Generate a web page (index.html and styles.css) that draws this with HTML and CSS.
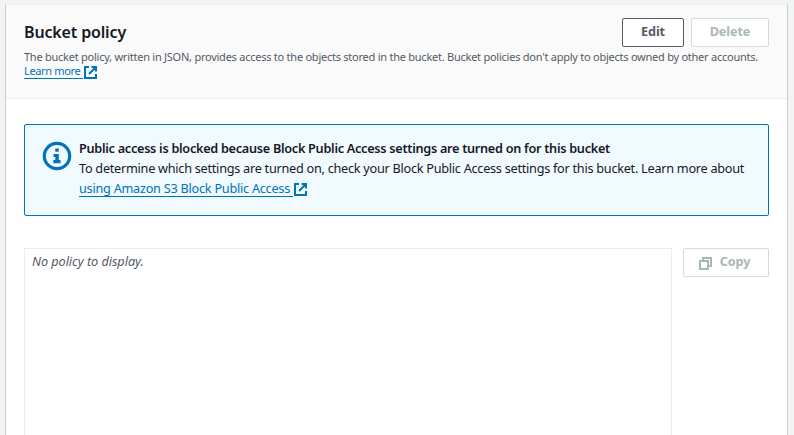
FILE: index.html
```
<!DOCTYPE html>
<html lang="en">
	<head>
		<meta charset="UTF-8" />
		<meta name="viewport" content="width=device-width, initial-scale=1.0" />
		<title>Bucket policy</title>
		<link rel="stylesheet" href="styles.css">
	</head>
	<body>
		<section class="panel">
			<header class="panel-header">
				<div class="title-row">
					<h2>Bucket policy</h2>
					<div class="actions">
						<button type="button" class="btn btn-edit">Edit</button>
						<button type="button" class="btn btn-delete" disabled>Delete</button>
					</div>
				</div>
				<p class="description">
					<span class="description-text">The bucket policy, written in JSON, provides access to the objects stored in the bucket. Bucket policies don't apply to objects owned by other accounts.</span><br />
					<a href="#" class="link learn-more"><span>Learn more</span><svg class="external" viewBox="0 0 13 13"><path d="M5 1H1v11h11V8M7.5 1H12v4.5M12 1L5 8" /></svg></a>
				</p>
			</header>

			<div class="panel-body">
				<div class="alert">
					<svg class="info" viewBox="0 0 30 30">
						<circle cx="15" cy="15" r="12.7" />
						<path d="M13.2 7.5h3.6v3.3h-3.6zM11.5 13h5.3v6h1.7v3.2h-7.2v-3.2h2v-3h-1.8z" />
					</svg>
					<div class="alert-content">
						<strong class="alert-title">Public access is blocked because Block Public Access settings are turned on for this bucket</strong>
						<span class="alert-text">To determine which settings are turned on, check your Block Public Access settings for this bucket. Learn more about</span>
						<a href="#" class="link alert-link"><span>using Amazon S3 Block Public Access</span><svg class="external" viewBox="0 0 13 13"><path d="M5 1H1v11h11V8M7.5 1H12v4.5M12 1L5 8" /></svg></a>
					</div>
				</div>

				<div class="policy">
					<div class="policy-text"><em>No policy to display.</em></div>
					<button type="button" class="btn btn-copy" disabled>
						<svg class="copy" viewBox="0 0 13 13"><path d="M1 4h8v8H1zM4 4V1h8v8H9" /></svg>
						<span>Copy</span>
					</button>
				</div>
			</div>
		</section>
	</body>
</html>
```
FILE: styles.css
```
* {
	box-sizing: border-box;
}

body {
	margin: 0;
	height: 435px;
	padding: 4px 6px 0 5px;
	background: #f2f3f3;
	color: #16191f;
	font-family: 'Noto Sans', 'Open Sans', sans-serif;
	font-size: 12.7px;
}

.panel {
	display: flex;
	flex-direction: column;
	height: 431px;
	background: #fff;
	border: 1px solid #c9cfcf;
	border-top-color: #eaeded;
	border-bottom: none;
}

.panel-header {
	height: 94px;
	padding: 13px 18px 0;
	background: #fafafa;
	border-bottom: 1px solid #eaeded;
}

.title-row {
	display: flex;
	justify-content: space-between;
	height: 32px;
}

h2 {
	margin: 4px 0 0;
	font-size: 16px;
	line-height: 20px;
	font-weight: 600;
	white-space: nowrap;
	letter-spacing: -0.15px;
}

.actions {
	display: flex;
	gap: 7px;
}

.btn {
	height: 29px;
	padding: 0 0 3px;
	display: flex;
	align-items: center;
	justify-content: center;
	background: #fff;
	border: 1px solid #545b64;
	border-radius: 2px;
	color: #545b64;
	font-family: inherit;
	font-size: 12.7px;
	font-weight: 700;
	letter-spacing: -0.1px;
}
.btn:disabled {
	border-color: #d5dbdb;
	color: #aab7b8;
}
.btn-edit {
	width: 62px;
}
.btn-delete {
	width: 78px;
}
.btn-copy {
	width: 86px;
	padding-right: 3px;
	gap: 8px;
}

.description {
	margin: 0;
	font-size: 11px;
	line-height: 14px;
	color: #545b64;
	white-space: nowrap;
}
.description-text {
	letter-spacing: -0.245px;
}

.link {
	display: inline-flex;
	color: #0073bb;
	text-decoration: none;
}
.link span {
	border-bottom: 1px solid #0073bb;
}

svg {
	flex: none;
	fill: none;
}
.external {
	width: 13px;
	height: 13px;
	stroke: #0073bb;
	stroke-width: 2;
}
.learn-more span {
	height: 15px;
	padding-right: 3px;
	letter-spacing: -0.35px;
}
.learn-more .external {
	margin: 2px 0 0 1px;
}

.panel-body {
	flex: 1;
	display: flex;
	flex-direction: column;
	padding: 25px 18px 0;
}

.alert {
	display: flex;
	height: 92px;
	padding: 13px 17px;
	background: #f1faff;
	border: 1px solid #0073bb;
	border-radius: 2px;
}
.info {
	width: 30px;
	height: 30px;
	margin: 3px 7px 0 0;
	stroke: #0073bb;
	stroke-width: 3.2;
}
.info path {
	fill: #0073bb;
	stroke: none;
}
.alert-content {
	display: flex;
	flex-direction: column;
	align-items: flex-start;
	line-height: 20px;
	white-space: nowrap;
}
.alert-title {
	font-weight: 600;
	letter-spacing: -0.285px;
}
.alert-text {
	letter-spacing: -0.265px;
}
.alert-link span {
	height: 19px;
	padding-right: 3px;
	letter-spacing: -0.25px;
}
.alert-link .external {
	margin: 5px 0 0 1px;
}

.policy {
	flex: 1;
	display: flex;
	align-items: flex-start;
	gap: 11px;
	margin-top: 32px;
}
.policy-text {
	flex: 1;
	align-self: stretch;
	padding: 2px 7px;
	border: 1px solid #eaeded;
	border-bottom: none;
	color: #545b64;
	line-height: 20px;
	letter-spacing: -0.05px;
}
.copy {
	width: 13px;
	height: 13px;
	margin-top: 4px;
	stroke: #aab7b8;
	stroke-width: 2;
}
```
